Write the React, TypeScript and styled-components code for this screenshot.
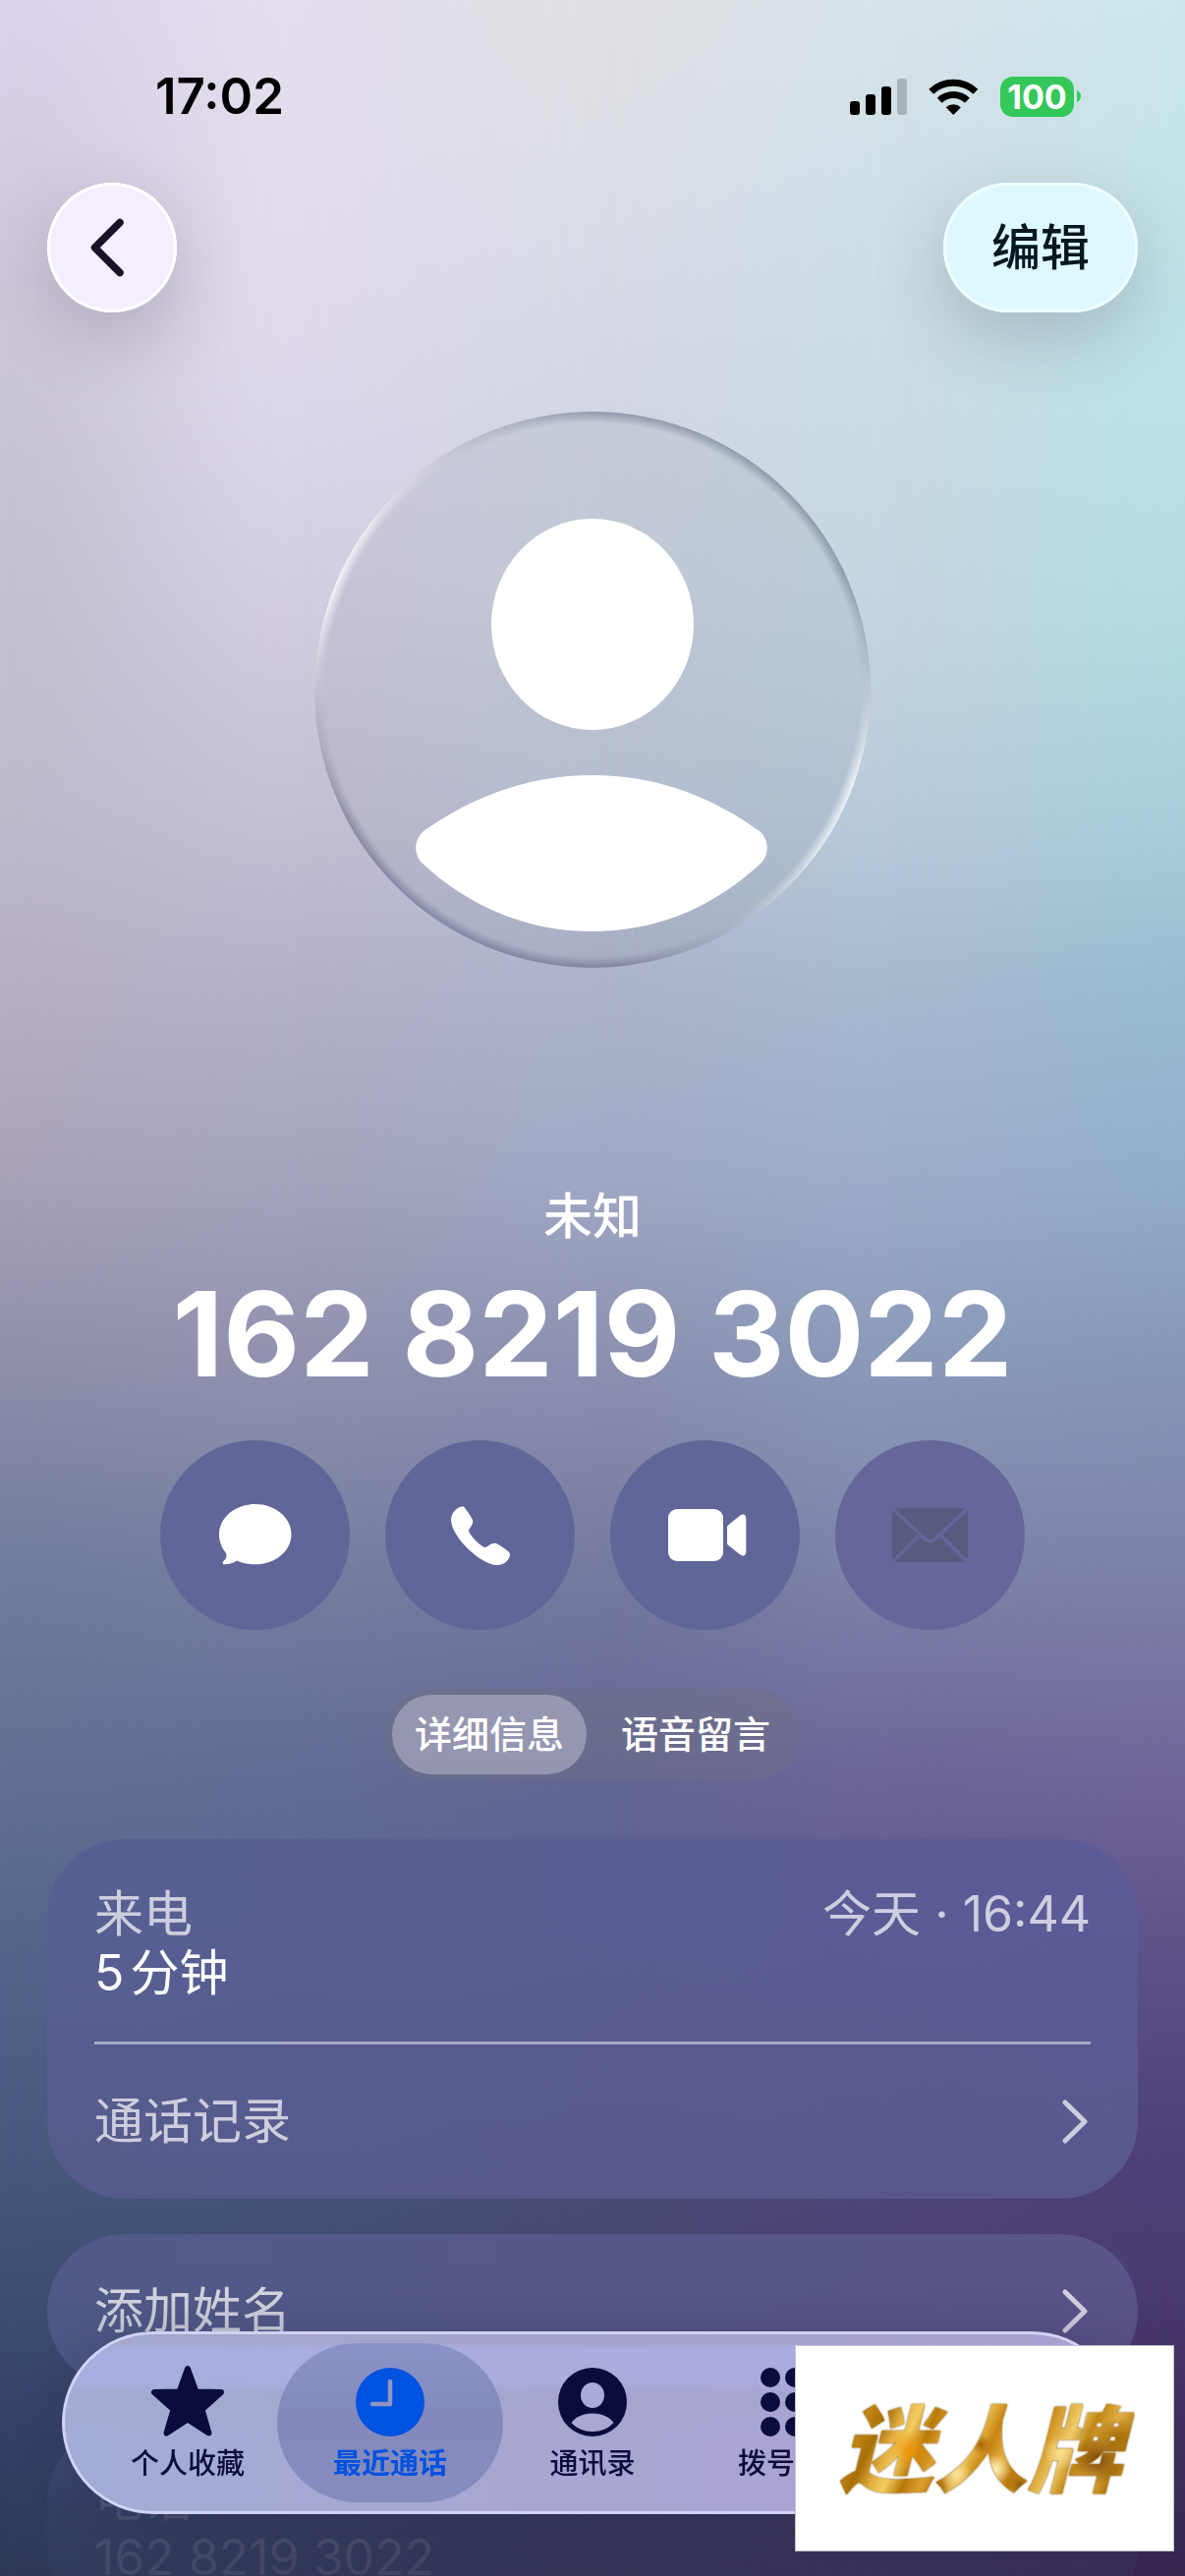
import styled, { createGlobalStyle, css } from "styled-components";
import { useState } from "react";

const navy = "#0a0c3c";
const blue = "#0052e0";
const white = "#ffffff";

// backdrop mesh: one vertical gradient per column, cross-faded left to right
const mesh = [
  {
    from: 0,
    to: 0,
    colors:
      "#dcd2ed 0%, #d3cadf 8%, #cbc6d5 15%, #c3c0cf 23%, #bebbcc 31%, #b8b0c5 38%, #a7a1b8 46%, #8e8faa 53%, #707c9b 61%, #627092 69%, #536489 76%, #46587c 84%, #3f5074 88%, #37446a 93%, #2e3956 100%",
  },
  {
    from: 0,
    to: 25,
    colors:
      "#e3ddec 0%, #e2dbeb 8%, #ddd8ea 15%, #d3cde2 23%, #c5c0d5 31%, #b4b2ca 38%, #a2a3bb 46%, #8f91ae 53%, #757e9f 61%, #626c94 69%, #57638b 76%, #46557a 84%, #424e74 88%, #384263 93%, #2e3452 100%",
  },
  {
    from: 25,
    to: 50,
    colors:
      "#e0e0e3 0%, #dadde6 8%, #d3d7e3 15%, #cbd2df 23%, #bdc6d8 31%, #adb4cb 38%, #9ea7c3 46%, #8c90b0 53%, #757a9f 61%, #626694 69%, #5a5f90 76%, #484c74 84%, #484870 88%, #3a3a60 93%, #303050 100%",
  },
  {
    from: 50,
    to: 75,
    colors:
      "#d7e3e9 0%, #cfdfe6 8%, #cadbe3 15%, #c4d6e0 23%, #b9cbdb 31%, #a8bad0 38%, #9babc7 46%, #8a99b8 53%, #7d82a8 61%, #6c6598 69%, #60568e 76%, #4e4578 84%, #4c4074 88%, #403660 93%, #342d50 100%",
  },
  {
    from: 75,
    to: 100,
    colors:
      "#cbe6e9 0%, #c4e3e7 8%, #bce1e6 15%, #b6dce1 23%, #abcfdb 31%, #9bbcd0 38%, #92acc8 46%, #8696b6 53%, #7d82a8 61%, #706599 69%, #5e5088 76%, #4e3e78 84%, #4b3c73 88%, #403062 93%, #34264c 100%",
  },
];

const StarIcon = () => (
  <svg width="76" height="76" viewBox="0 0 76 76" aria-hidden="true">
    <path
      d="M38 4 46.5 27.5 72 28 52.5 45.5 59.5 69.5 38 55.5 16.5 69.5 23.5 45.5 4 28 29.5 27.5Z"
      fill="currentColor"
      stroke="currentColor"
      strokeWidth="6"
      strokeLinejoin="round"
    />
  </svg>
);

const ClockIcon = () => (
  <svg width="70" height="70" viewBox="0 0 70 70" aria-hidden="true">
    <circle cx="35" cy="35" r="35" fill="currentColor" />
    <path
      d="M35 14V37H17"
      fill="none"
      stroke="#8f96c2"
      strokeWidth="4.5"
      strokeLinecap="round"
      strokeLinejoin="round"
    />
  </svg>
);

const ContactIcon = () => (
  <svg width="70" height="70" viewBox="0 0 70 70" aria-hidden="true">
    <circle cx="35" cy="35" r="35" fill="currentColor" />
    <ellipse cx="35" cy="28" rx="12" ry="13" fill="#aba9da" />
    <path
      d="M35 46.5C46 46.5 53 51 56.5 56C51 62 43.5 65 35 65S19 62 13.5 56C17 51 24 46.5 35 46.5Z"
      fill="#aaa7d2"
    />
  </svg>
);

const KeypadIcon = () => (
  <svg width="70" height="70" viewBox="0 0 70 70" aria-hidden="true">
    {[10, 35, 60].map((cy) =>
      [10, 35, 60].map((cx) => (
        <circle key={`${cx}-${cy}`} cx={cx} cy={cy} r="10" fill="currentColor" />
      ))
    )}
  </svg>
);

const BubbleIcon = () => (
  <svg width="74" height="64" viewBox="0 0 74 64" aria-hidden="true">
    <path
      fill="currentColor"
      d="M36.7 0C57 0 73.5 13.5 73.5 30.7S57 61.3 36.7 61.3C29.7 61.3 23.5 60 18 57.5C14.5 60 10 61.3 5.5 61.3C3.5 61.3 3 59.5 4.5 58C7.3 55.3 8.4 53 6.8 49.5C2.5 44 0 38 0 30.7C0 13.5 16.5 0 36.7 0Z"
    />
  </svg>
);

const PhoneIcon = () => (
  <svg width="60" height="60" viewBox="0 0 60 60" aria-hidden="true">
    <path
      fill="currentColor"
      d="M4 4.5C7 1.2 11 -.3 13 .7C14.5 2 20 10 21.5 13C23 16 22 18 20.5 20.5L18.5 23.5C17.8 25 18 26 19 27.5C22.5 33 27.5 38 32.5 41.2C34 42.2 35 42.2 36.5 41.2L41 38.6C44 37.2 46 37.6 48.5 39.2L57 45C60 47.2 60.6 49.4 59.4 52C57.5 57 52.5 60 46.5 60C31 60 .5 32 0 14C0 10 1.5 7 4 4.5Z"
    />
  </svg>
);

const VideoIcon = () => (
  <svg width="84" height="53" viewBox="-4 0 84 53" aria-hidden="true">
    <rect x="0" y="0" width="56" height="53" rx="9" fill="currentColor" />
    <path
      fill="currentColor"
      d="M60 19C60 17.5 60.5 16.8 61.5 16L72 7.5C75.5 4.5 79.3 5 79.3 9.5V43.5C79.3 48 75.5 48.5 72 45.5L61.5 37C60.5 36.2 60 35.5 60 34Z"
    />
  </svg>
);

const MailIcon = () => (
  <svg width="77" height="55" viewBox="0 0 77 55" aria-hidden="true">
    <rect width="77" height="55" rx="5" fill="currentColor" />
    <g fill="none" stroke="#656699" strokeWidth="3.5">
      <path d="M1 1 33 31Q38.5 37 44 31L76 1" />
      <path d="M1 54 28 27M76 54 49 27" />
    </g>
  </svg>
);

const ChevronRight = () => (
  <svg width="29" height="45" viewBox="0 0 29 45" aria-hidden="true">
    <path
      d="M3 3 23 22.5 3 42"
      fill="none"
      stroke="currentColor"
      strokeWidth="5"
      strokeLinecap="round"
      strokeLinejoin="round"
    />
  </svg>
);

const actions = [
  { label: "信息", icon: <BubbleIcon /> },
  { label: "呼叫", icon: <PhoneIcon /> },
  { label: "视频", icon: <VideoIcon /> },
  { label: "邮件", icon: <MailIcon />, disabled: true },
];

const tabs = [
  { label: "个人收藏", icon: <StarIcon /> },
  { label: "最近通话", icon: <ClockIcon /> },
  { label: "通讯录", icon: <ContactIcon /> },
  { label: "拨号键盘", icon: <KeypadIcon /> },
];

const segments = ["详细信息", "语音留言"];

const App = () => {
  const [segment, setSegment] = useState(segments[0]);
  const [tab, setTab] = useState("最近通话");

  return (
    <Page>
      <GlobalStyle />
      <Backdrop>
        {mesh.map((column) => (
          <MeshColumn
            key={column.to}
            $from={column.from}
            $to={column.to}
            $colors={column.colors}
          />
        ))}
      </Backdrop>

      <StatusBar>
        <Time>17:02</Time>
        <StatusIcons>
          <svg width="58" height="37" viewBox="0 0 58 37" aria-hidden="true">
            <rect x="0" y="23" width="10" height="14" rx="3" />
            <rect x="16" y="16" width="10" height="21" rx="3" />
            <rect x="32" y="8" width="10" height="29" rx="3" />
            <rect x="48" y="0" width="10" height="37" rx="3" opacity="0.2" />
          </svg>
          <svg width="51" height="37" viewBox="0 0 51 37" aria-hidden="true">
            <g fill="none" stroke="#000" strokeWidth="7">
              <path d="M2.7 13.2A33.2 33.2 0 0 1 47.9 13.2" />
              <path d="M11.2 22.2A20.4 20.4 0 0 1 39.4 22.2" />
            </g>
            <path d="M25.3 37 17.7 29.3A11 11 0 0 1 32.9 29.3Z" />
          </svg>
          <Battery>
            <BatteryLevel>100</BatteryLevel>
            <svg width="4" height="12" viewBox="0 0 4 12" aria-hidden="true">
              <path d="M0 0Q4 2 4 6T0 12Z" fill="#34c759" />
            </svg>
          </Battery>
        </StatusIcons>
      </StatusBar>

      <Header>
        <RoundButton aria-label="返回" $tint="#f5eeff" $rim="#ffffff">
          <svg width="46" height="60" viewBox="0 0 46 60" aria-hidden="true">
            <path
              d="M31 4.500 5.500 30 31 55.500"
              fill="none"
              stroke="#1a1226"
              strokeWidth="7.5"
              strokeLinecap="round"
              strokeLinejoin="round"
            />
          </svg>
        </RoundButton>
        <RoundButton $wide $tint="#def8ff" $rim="#eefeff">
          编辑
        </RoundButton>
      </Header>

      <Avatar>
        <svg width="566" height="566" viewBox="0 0 566 566" aria-hidden="true">
          <ellipse cx="283" cy="216.5" rx="103" ry="107.5" fill={white} />
          <path
            fill={white}
            d="M283 370C218 370 160 392 111 427C101 436 101 450 109 459C158 505 218 529 283 529S406 505 455 459C463 450 463 436 453 427C404 392 348 370 283 370Z"
          />
        </svg>
      </Avatar>

      <Caption>未知</Caption>
      <PhoneNumber>162 8219 3022</PhoneNumber>

      <Actions>
        {actions.map(({ label, icon, disabled }) => (
          <ActionButton key={label} aria-label={label} disabled={disabled}>
            {icon}
          </ActionButton>
        ))}
      </Actions>

      <Segmented role="tablist">
        {segments.map((name) => (
          <Segment
            key={name}
            role="tab"
            aria-selected={segment === name}
            $active={segment === name}
            onClick={() => setSegment(name)}
          >
            {name}
          </Segment>
        ))}
      </Segmented>

      <Cards>
        <Card>
          <CallInfo>
            <Line>
              <span>来电</span>
              <span>今天 · 16:44</span>
            </Line>
            <Duration>
              <span>5</span>
              <span>分钟</span>
            </Duration>
          </CallInfo>
          <Divider />
          <RowButton>
            通话记录
            <ChevronRight />
          </RowButton>
        </Card>
        <Card $dim>
          <RowButton>
            添加姓名
            <ChevronRight />
          </RowButton>
        </Card>
        <Card $dim>
          <CallInfo>
            <Line>电话</Line>
            <Line>162 8219 3022</Line>
          </CallInfo>
        </Card>
      </Cards>

      <TabBar>
        {tabs.map(({ label, icon }) => (
          <Tab
            key={label}
            $active={tab === label}
            onClick={() => setTab(label)}
          >
            <TabIcon>{icon}</TabIcon>
            <TabLabel $active={tab === label}>{label}</TabLabel>
          </Tab>
        ))}
      </TabBar>

      <Badge>
        <BadgeText>迷人牌</BadgeText>
      </Badge>
    </Page>
  );
};

export default App;

const GlobalStyle = createGlobalStyle`
  * {
    box-sizing: border-box;
  }

  body {
    margin: 0;
    font-family: Inter, "Noto Sans CJK SC", sans-serif;
  }

  button {
    font: inherit;
    color: inherit;
    border: 0;
    padding: 0;
    margin: 0;
    background: none;
  }

  svg {
    display: block;
    flex-shrink: 0;
  }
`;

const Page = styled.main`
  position: relative;
  isolation: isolate;
  height: 100vh;
  overflow: hidden;
  display: flex;
  flex-direction: column;
  align-items: center;
  color: ${white};
`;

const Backdrop = styled.div`
  position: absolute;
  inset: 0;
  z-index: -1;
`;

const MeshColumn = styled.div<{ $from: number; $to: number; $colors: string }>`
  position: absolute;
  inset: 0;
  background: linear-gradient(to bottom, ${({ $colors }) => $colors});
  ${({ $from, $to }) =>
    $to > 0 &&
    css`
      mask-image: linear-gradient(
        to right,
        transparent ${$from}%,
        rgba(0, 0, 0, 0.06) ${$from + 4}%,
        rgba(0, 0, 0, 0.94) ${$to - 4}%,
        #000 ${$to}%
      );
    `}
`;

const StatusBar = styled.div`
  align-self: stretch;
  display: flex;
  justify-content: space-between;
  align-items: center;
  padding: 68px 106px 0 158px;
  color: #000000;
`;

const Time = styled.span`
  font-size: 51px;
  font-weight: 600;
  line-height: 60px;
`;

const StatusIcons = styled.div`
  display: flex;
  align-items: center;
  gap: 22px;
`;

const Battery = styled.div`
  display: flex;
  align-items: center;
  gap: 3px;
`;

const BatteryLevel = styled.span`
  width: 75px;
  border-radius: 13px;
  background-color: #34c759;
  color: ${white};
  font-size: 34px;
  font-weight: 700;
  line-height: 41px;
  text-align: center;
`;

const Header = styled.header`
  align-self: stretch;
  display: flex;
  justify-content: space-between;
  padding: 58px 48px 0;
`;

const RoundButton = styled.button<{
  $wide?: boolean;
  $tint: string;
  $rim: string;
}>`
  display: flex;
  align-items: center;
  justify-content: center;
  width: ${({ $wide }) => ($wide ? 198 : 132)}px;
  height: 132px;
  border-radius: 66px;
  background-color: ${({ $tint }) => $tint};
  color: #06181e;
  font-size: 50px;
  font-weight: 500;
  line-height: 60px;
  box-shadow: inset 0 0 0 3px ${({ $rim }) => $rim},
    0 24px 72px rgba(60, 60, 80, 0.24);
`;

const Avatar = styled.div`
  position: relative;
  margin-top: 101px;
  border-radius: 50%;
  background-color: rgba(120, 130, 150, 0.13);

  &::after {
    content: "";
    position: absolute;
    inset: 0;
    border-radius: 50%;
    background: conic-gradient(
      rgba(110, 118, 140, 0.6) 0deg,
      rgba(110, 122, 140, 0.6) 65deg,
      rgba(160, 165, 180, 0.3) 85deg,
      rgba(255, 255, 255, 0.85) 110deg,
      rgba(255, 255, 255, 0.7) 125deg,
      rgba(160, 165, 180, 0.3) 152deg,
      rgba(100, 105, 135, 0.6) 175deg,
      rgba(100, 105, 135, 0.6) 240deg,
      rgba(160, 165, 180, 0.3) 265deg,
      rgba(255, 255, 255, 0.85) 290deg,
      rgba(255, 255, 255, 0.7) 305deg,
      rgba(170, 170, 180, 0.3) 332deg,
      rgba(110, 118, 140, 0.6) 360deg
    );
    mask-image: radial-gradient(
      closest-side,
      transparent 96%,
      rgba(0, 0, 0, 0.5) 98%,
      #000 100%
    );
  }
`;

const Caption = styled.p`
  margin: 223px 0 0;
  font-size: 50px;
  font-weight: 500;
  line-height: 60px;
`;

const PhoneNumber = styled.h1`
  margin: 18px 0 0;
  font-size: 120px;
  font-weight: 700;
  line-height: 144px;
  white-space: nowrap;
`;

const Actions = styled.div`
  display: flex;
  gap: 36px;
  margin-top: 36px;
`;

const ActionButton = styled.button`
  display: flex;
  align-items: center;
  justify-content: center;
  width: 193px;
  height: 193px;
  border-radius: 50%;
  background-color: #616698;

  &:disabled {
    background-color: #656699;
    color: #585a80;
  }
`;

const Segmented = styled.div`
  display: flex;
  gap: 12px;
  margin-top: 60px;
  padding: 6px;
  border-radius: 47px;
  background-color: rgba(112, 112, 128, 0.4);
`;

const Segment = styled.button<{ $active: boolean }>`
  width: 198px;
  border-radius: 41px;
  background-color: ${({ $active }) =>
    $active ? "rgba(178, 178, 200, 0.6)" : "transparent"};
  font-size: 38px;
  font-weight: 500;
  line-height: 81px;
`;

const Cards = styled.section`
  align-self: stretch;
  flex: 1;
  min-height: 0;
  overflow: hidden;
  display: flex;
  flex-direction: column;
  gap: 36px;
  margin-top: 60px;
  padding: 0 48px;
  mask-image: linear-gradient(
    to bottom,
    #000 58%,
    rgba(0, 0, 0, 0.8) 68%,
    rgba(0, 0, 0, 0.16) 90%,
    rgba(0, 0, 0, 0.1) 100%
  );
`;

const Card = styled.div<{ $dim?: boolean }>`
  flex-shrink: 0;
  padding: 0 48px;
  border-radius: 79px;
  background: ${({ $dim }) =>
    $dim
      ? "linear-gradient(to right, #525a88, #5a558a)"
      : "linear-gradient(to bottom, transparent 20%, rgba(84, 84, 132, 0.5)), linear-gradient(to right, #576092, #5c5a97)"};
  color: ${({ $dim }) =>
    $dim ? "rgba(255, 255, 255, 0.8)" : "rgba(255, 255, 255, 0.7)"};
  font-size: 50px;
`;

const CallInfo = styled.div`
  padding: 46px 0 40px;
`;

const Line = styled.div`
  display: flex;
  justify-content: space-between;
  line-height: 60px;
`;

const Duration = styled(Line)`
  justify-content: flex-start;
  gap: 6px;
  color: ${white};
`;

const Divider = styled.hr`
  height: 3px;
  margin: 0;
  border: 0;
  background-color: rgba(255, 255, 255, 0.48);
`;

const RowButton = styled.button`
  width: 100%;
  display: flex;
  align-items: center;
  justify-content: space-between;
  line-height: 157px;
`;

const TabBar = styled.nav`
  position: absolute;
  left: 63px;
  right: 63px;
  bottom: 63px;
  height: 186px;
  display: grid;
  grid-template-columns: repeat(5, 1fr);
  padding: 12px 25px;
  border-radius: 93px;
  background: linear-gradient(
      to bottom,
      rgba(160, 160, 195, 0.4) 0%,
      rgba(160, 160, 195, 0.4) 6%,
      rgba(172, 176, 232, 0.6) 10%,
      rgba(172, 176, 232, 0.6) 28%,
      rgba(160, 165, 200, 0.3) 34%,
      transparent 60%
    ),
    linear-gradient(to right, #a3add5, #a8a5d0 50%, #aea2d8);
  box-shadow: inset 0 0 0 3px rgba(225, 225, 255, 0.75),
    0 12px 48px rgba(20, 20, 60, 0.18);
  color: ${navy};
`;

const Tab = styled.button<{ $active: boolean }>`
  position: relative;
  isolation: isolate;
  display: flex;
  flex-direction: column;
  align-items: center;
  padding-top: 20px;
  color: ${({ $active }) => ($active ? blue : navy)};

  /* highlight runs wider than its own column */
  &::before {
    content: "";
    position: absolute;
    z-index: -1;
    inset: 0 -12px;
    border-radius: 81px;
    background: ${({ $active }) =>
      $active ? "linear-gradient(#8a92c9, #838abb 45%, #868cbd)" : "none"};
  }
`;

const TabIcon = styled.span`
  height: 80px;
  display: flex;
  align-items: center;
`;

const TabLabel = styled.span<{ $active: boolean }>`
  font-size: 29px;
  font-weight: ${({ $active }) => ($active ? 700 : 500)};
  line-height: 46px;
`;

const Badge = styled.aside`
  position: absolute;
  right: 11px;
  bottom: 25px;
  width: 386px;
  height: 210px;
  display: flex;
  align-items: center;
  justify-content: center;
  padding: 4px 8px 0 0;
  border: 1px solid #c4c4c8;
  background-color: ${white};
`;

const BadgeText = styled.span`
  padding: 0 12px;
  font-size: 96px;
  font-weight: 900;
  font-style: italic;
  line-height: 120px;
  color: transparent;
  background: radial-gradient(circle at 27% 50%, #ee960c 0%, transparent 9%),
    radial-gradient(circle at 88% 58%, #7a4602 0%, transparent 9%),
    radial-gradient(circle at 94% 40%, #a06804 0%, transparent 7%),
    radial-gradient(circle at 42% 70%, #fbe6a0 0%, transparent 8%),
    radial-gradient(circle at 55% 66%, #fff0b8 0%, transparent 8%),
    radial-gradient(circle at 50% 45%, #a86404 0%, transparent 6%),
    radial-gradient(circle at 36% 84%, #8a5404 0%, transparent 5%),
    radial-gradient(circle at 63% 80%, #8f5a06 0%, transparent 5%),
    radial-gradient(circle at 76% 52%, #f8dc90 0%, transparent 7%),
    linear-gradient(
      115deg,
      #9c6204 8%,
      #c08412 14%,
      #a87008 19%,
      #e4b040 24%,
      #f2cc62 28%,
      #b87808 33%,
      #dca030 38%,
      #b87410 42%,
      #e8bc50 47%,
      #c88410 52%,
      #e0ac40 57%,
      #b8780c 62%,
      #d49a28 67%,
      #f0cc6c 73%,
      #c08614 78%,
      #e2b048 84%,
      #b0780e 90%,
      #d09a2c 96%
    );
  background-clip: text;
  filter: drop-shadow(0 0 1px #7a5008);
`;
